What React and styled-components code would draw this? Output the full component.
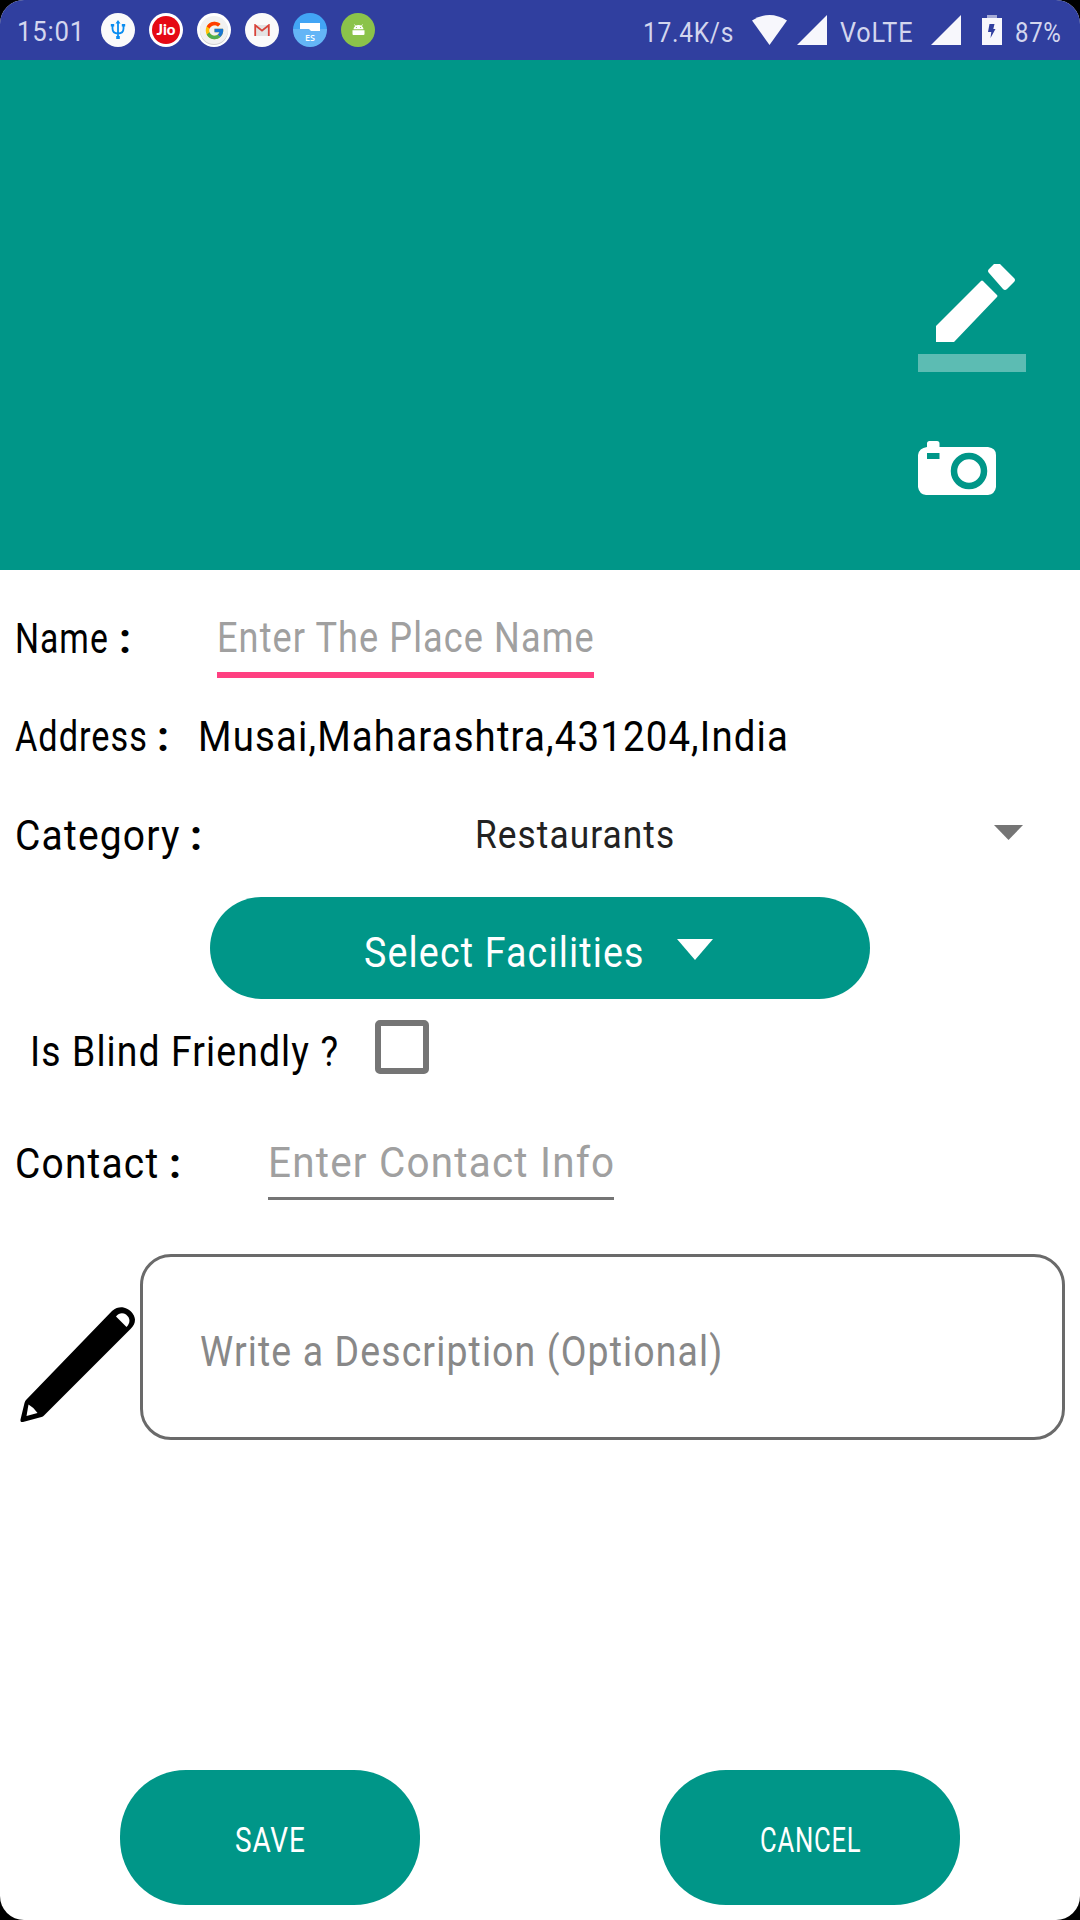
import React, { useLayoutEffect, useRef, useState } from "react";
import styled, { createGlobalStyle } from "styled-components";
import { FcGoogle } from "react-icons/fc";

const TEAL = "#009688";

const GlobalStyle = createGlobalStyle`
  html, body { margin: 0; padding: 0; background: #000; }
  * { box-sizing: border-box; }
  body { font-family: Roboto, "Open Sans", "Liberation Sans", sans-serif; }
`;

const Screen = styled.div`
  width: 1080px;
  height: 1920px;
  display: flex;
  flex-direction: column;
  overflow: hidden;
  border-radius: 24px;
  background: #fff;
`;

/* Text condensed to a given width */
const TextBox = styled.span`
  display: block;
  flex: none;
  width: ${(p) => p.$w}px;
  margin-left: ${(p) => p.$ml || 0}px;
  padding-top: ${(p) => p.$pt || 0}px;
  font-size: ${(p) => p.$size || 43}px;
  line-height: ${(p) => p.$lh || 60}px;
  color: ${(p) => p.$color || "#000"};
  font-weight: ${(p) => (p.$bold ? 700 : 400)};
`;
const TextInner = styled.span`
  display: inline-block;
  vertical-align: top;
  white-space: pre;
  letter-spacing: 0.03em;
  transform-origin: 0 50%;
`;

function Fit({ w, ml, pt, size, lh, color, bold, children }) {
  const ref = useRef(null);
  const [scale, setScale] = useState(1);
  useLayoutEffect(() => {
    setScale(w / ref.current.offsetWidth);
  }, [w, children]);
  return (
    <TextBox $w={w} $ml={ml} $pt={pt} $size={size} $lh={lh} $color={color} $bold={bold}>
      <TextInner ref={ref} style={{ transform: `scaleX(${scale})` }}>
        {children}
      </TextInner>
    </TextBox>
  );
}

const StatusBar = styled.header`
  height: 60px;
  flex: none;
  display: flex;
  align-items: center;
  justify-content: space-between;
  padding: 0 18px 0 17px;
  background: #303f9f;
`;
const StatusGroup = styled.div`
  display: flex;
  align-items: center;
`;
const Badges = styled.div`
  display: flex;
  gap: 14px;
  margin-left: 16px;
`;
const Badge = styled.div`
  width: 34px;
  height: 34px;
  border-radius: 50%;
  overflow: hidden;
  display: flex;
  align-items: center;
  justify-content: center;
  background: ${(p) => p.$bg || "#fafafa"};
`;
const JioDisc = styled.div`
  width: 28px;
  height: 28px;
  border-radius: 50%;
  background: #e50914;
  color: #fff;
  font: 900 15px/27px Lato, sans-serif;
  text-align: center;
`;
const GoogleDisc = styled.div`
  width: 28px;
  height: 28px;
  border-radius: 50%;
  background: #f1f1f1;
  box-shadow: 0 1px 0 #cfcfcf;
  display: flex;
  align-items: center;
  justify-content: center;
`;
const EsBadge = styled(Badge)`
  flex-direction: column;
  justify-content: flex-start;
  background: linear-gradient(#42a5f5 16px, #64b5f6 16px);
  color: #fff;
  font: 600 9px/11px "Open Sans", sans-serif;
`;
const StatusIcon = styled.svg`
  display: block;
  margin-left: ${(p) => p.$ml}px;
`;

const Cover = styled.section`
  height: 510px;
  flex: none;
  display: flex;
  flex-direction: column;
  align-items: flex-start;
  padding: 204px 0 0 918px;
  gap: 69px;
  background: ${TEAL};
  svg { display: block; }
`;

const Form = styled.main`
  display: flex;
  flex-direction: column;
`;
const Row = styled.div`
  display: flex;
  align-items: center;
  height: ${(p) => p.$h || 60}px;
  margin-top: ${(p) => p.$mt}px;
  padding-left: ${(p) => p.$pl ?? 15}px;
`;
const Field = styled.div`
  width: ${(p) => p.$w}px;
  height: 100%;
  margin-left: ${(p) => p.$ml}px;
  border-bottom: ${(p) => (p.$focused ? "6px solid #ff4081" : "3px solid #757575")};
`;
const Caret = styled.svg`
  display: block;
  flex: none;
  margin: ${(p) => p.$mt || 0}px 0 ${(p) => p.$mb || 0}px ${(p) => p.$ml}px;
`;
const Pill = styled.button`
  display: flex;
  align-items: center;
  justify-content: ${(p) => (p.$start ? "flex-start" : "center")};
  width: ${(p) => p.$w}px;
  height: ${(p) => p.$h}px;
  padding: 0;
  border: 0;
  border-radius: ${(p) => p.$r}px;
  background: ${TEAL};
  font-family: inherit;
  text-align: left;
`;
const FacilitiesRow = styled.div`
  display: flex;
  justify-content: center;
  margin-top: 33px;
`;
const Checkbox = styled.div`
  width: 54px;
  height: 54px;
  margin-left: 36px;
  border: 6px solid #757575;
  border-radius: 5px;
`;
const DescriptionRow = styled.div`
  display: flex;
  align-items: flex-start;
  margin-top: 54px;
  padding-left: 18px;
`;
const PencilIcon = styled.svg`
  display: block;
  flex: none;
  margin: 51px 4px 0 0;
`;
const DescriptionBox = styled.div`
  display: flex;
  align-items: center;
  width: 925px;
  height: 186px;
  border: 3px solid #6a6a6a;
  border-radius: 31px;
`;
const Actions = styled.footer`
  display: flex;
  gap: 240px;
  margin-top: 330px;
  padding-left: 120px;
`;

const STATUS_TEXT = "#d3d6ee";

function Label({ text, w, colonGap, pt }) {
  return (
    <>
      <Fit w={w} pt={pt}>{text}</Fit>
      <Fit w={13} ml={colonGap} pt={pt} bold>:</Fit>
    </>
  );
}

function Signal({ ml }) {
  return (
    <StatusIcon $ml={ml} width="30" height="30" viewBox="0 0 30 30">
      <path d="M30 0V30H0Z" fill="#f7f7fc" />
    </StatusIcon>
  );
}

export default function App() {
  return (
    <>
      <GlobalStyle />
      <Screen>
        <StatusBar>
          <StatusGroup>
            <Fit w={68} size={28} pt={4} color={STATUS_TEXT}>15:01</Fit>
            <Badges>
              <Badge>
                <svg width="18" height="20" viewBox="0 0 18 20" fill="none" stroke="#0b8df0" strokeWidth="1.8">
                  <path d="M9 2V19M3.500 4V8.500Q3.500 13.500 9 13.500Q14.500 13.500 14.500 8.500V4" />
                  <path d="M6.5 3.5L9 0L11.5 3.5ZM1.8 4H5.2V6.5H1.8ZM12.8 4H16.2V6.5H12.8ZM7.2 16H10.8V19H7.2Z" fill="#0b8df0" stroke="none" />
                </svg>
              </Badge>
              <Badge $bg="#fff"><JioDisc>Jio</JioDisc></Badge>
              <Badge $bg="#fff"><GoogleDisc><FcGoogle size={21} /></GoogleDisc></Badge>
              <Badge>
                <svg width="16" height="12" viewBox="0 0 16 12">
                  <path d="M2 1H14V12H2Z" fill="#e3e3e3" />
                  <path d="M1.2 12V1.2L8 6.6L14.8 1.2V12" fill="none" stroke="#d8433a" strokeWidth="1.8" />
                </svg>
              </Badge>
              <EsBadge>
                <svg width="22" height="19" viewBox="0 0 22 19">
                  <path d="M1 10H21V18H12L10 16H1Z" fill="#fff" />
                </svg>
                ES
              </EsBadge>
              <Badge $bg="#8bc34a">
                <svg width="13" height="12" viewBox="0 0 13 12">
                  <path d="M1.5 5.2A5 4.3 0 0 1 11.5 5.2ZM.5 6.2H12.5V10Q12.5 11 11.5 11H1.5Q.5 11 .5 10Z" fill="#fff" />
                  <path d="M3.6 2L2.5 .5M9.4 2L10.5 .5" stroke="#fff" strokeWidth=".9" />
                  <circle cx="4.4" cy="3.5" r=".6" fill="#8bc34a" />
                  <circle cx="8.6" cy="3.5" r=".6" fill="#8bc34a" />
                </svg>
              </Badge>
            </Badges>
          </StatusGroup>
          <StatusGroup>
            <Fit w={91} size={28} pt={5} color={STATUS_TEXT}>17.4K/s</Fit>
            <StatusIcon $ml={18} width="35" height="30" viewBox="0 0 35 30">
              <path d="M0 5.5Q17.5 -5.5 35 5.5L17.5 30Z" fill="#f7f7fc" />
            </StatusIcon>
            <Signal ml={10} />
            <Fit w={73} ml={13} size={28} pt={5} color={STATUS_TEXT}>VoLTE</Fit>
            <Signal ml={18} />
            <StatusIcon $ml={21} width="20" height="30" viewBox="0 0 20 30">
              <path d="M5 0H15V3H5Z" fill="#a5abd6" />
              <path d="M0 3H20V30H0Z" fill="#f7f7fc" />
              <path d="M7.5 9H12.5L11.3 14H13.5L8.5 23L9.3 17H6Z" fill="#303f9f" />
            </StatusIcon>
            <Fit w={47} ml={13} size={28} pt={5} color={STATUS_TEXT}>87%</Fit>
          </StatusGroup>
        </StatusBar>

        <Cover>
          <svg width="108" height="108" viewBox="0 0 108 108" fill="#fff">
            <path d="M18 62L63 17Q64 16 65 17L79 31Q80 32 79 33L36 78H18ZM71 9Q69 7 71 5L76 0H82L96 14Q98 16 96 18L89 25Q87 27 85 25Z" />
            <path fillOpacity=".36" d="M0 90H108V108H0Z" />
          </svg>
          <svg width="78" height="54" viewBox="0 0 78 54">
            <path d="M9 6V2.5Q9 0 11.5 0H19Q21.5 0 21.5 2.5V6H70Q78 7 78 14V46Q77 53 70 54H8Q1 53 0 46V14Q1 7 9 6Z" fill="#fff" />
            <path d="M9 12H21.5V18H9Z" fill={TEAL} />
            <circle cx="51" cy="30" r="15" fill="#fff" stroke={TEAL} strokeWidth="6.5" />
          </svg>
        </Cover>

        <Form>
          <Row $mt={27} $h={81}>
            <Label text="Name" w={94} colonGap={10} />
            <Field $w={377} $ml={85} $focused>
              <Fit w={378} lh={79} pt={1} color="#a0a0a0">Enter The Place Name</Fit>
            </Field>
          </Row>
          <Row $mt={27}>
            <Label text="Address" w={133} colonGap={9} pt={2} />
            <Fit w={591} ml={28} pt={2}>Musai,Maharashtra,431204,India</Fit>
          </Row>
          <Row $mt={39}>
            <Label text="Category" w={166} colonGap={9} pt={1} />
            <Fit w={200} ml={272} size={39} pt={1} color="#222">Restaurants</Fit>
            <Caret $ml={319} $mb={4} width="29" height="15" viewBox="0 0 29 15">
              <path d="M0 0H29L14.5 15Z" fill="#757575" />
            </Caret>
          </Row>

          <FacilitiesRow>
            <Pill $w={660} $h={102} $r={51} $start>
              <Fit w={281} ml={154} pt={7} color="#fff">Select Facilities</Fit>
              <Caret $ml={32} $mt={2} width="36" height="21" viewBox="0 0 36 21">
                <path d="M0 0H36L18 21Z" fill="#fff" />
              </Caret>
            </Pill>
          </FacilitiesRow>

          <Row $mt={18} $pl={30}>
            <Fit w={309} pt={7}>Is Blind Friendly ?</Fit>
            <Checkbox />
          </Row>

          <Row $mt={45} $h={78}>
            <Label text="Contact" w={144} colonGap={10} pt={4} />
            <Field $w={346} $ml={86}>
              <Fit w={347} lh={78} pt={1} color="#a0a0a0">Enter Contact Info</Fit>
            </Field>
          </Row>

          <DescriptionRow>
            <PencilIcon width="118" height="120" viewBox="0 0 118 120">
              <path d="M8 95L94 6C98 2.500 102 2 105.500 2.500C112 4 116.500 9 117 14.500C117 18.500 115.500 21 113 23.500L26 110.500Q25 111.500 23.500 112L5 117Q2 117.500 2.500 114.500L6.500 98Q7 96 8 95Z" />
              <path d="M98 11.500C101 7.500 105 7.500 108 9.500C112.500 13 112.500 18 108.500 22Z" fill="#fff" />
              <path d="M10.500 99.500Q16 102.500 19.500 108L8.500 111Z" fill="#fff" />
            </PencilIcon>
            <DescriptionBox>
              <Fit w={523} ml={57} pt={7} color="#888">Write a Description (Optional)</Fit>
            </DescriptionBox>
          </DescriptionRow>

          <Actions>
            <Pill $w={300} $h={135} $r={66}>
              <Fit w={71} size={35} pt={6} color="#fff">SAVE</Fit>
            </Pill>
            <Pill $w={300} $h={135} $r={66}>
              <Fit w={101} size={35} pt={6} color="#fff">CANCEL</Fit>
            </Pill>
          </Actions>
        </Form>
      </Screen>
    </>
  );
}
